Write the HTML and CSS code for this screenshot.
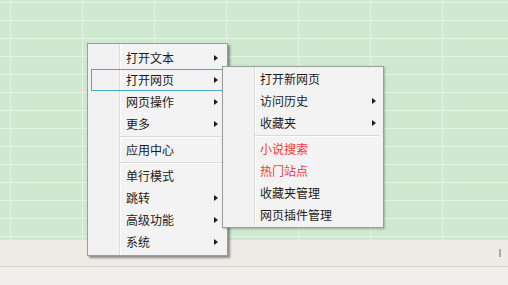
FILE: index.html
```html
<!DOCTYPE html>
<html lang="zh">
<head>
<meta charset="utf-8">
<link rel="stylesheet" href="styles.css">
</head>
<body>
<div class="desk">
  <div class="sheet"></div>
  <div class="status"><span class="grip"></span></div>
  <div class="footer"></div>

  <div class="menu main">
    <div class="item"><span>打开文本</span><i class="arrow"></i></div>
    <div class="item active"><span>打开网页</span><i class="arrow"></i></div>
    <div class="item"><span>网页操作</span><i class="arrow"></i></div>
    <div class="item"><span>更多</span><i class="arrow"></i></div>
    <div class="sep"></div>
    <div class="item"><span>应用中心</span></div>
    <div class="sep"></div>
    <div class="item"><span>单行模式</span></div>
    <div class="item"><span>跳转</span><i class="arrow"></i></div>
    <div class="item"><span>高级功能</span><i class="arrow"></i></div>
    <div class="item"><span>系统</span><i class="arrow"></i></div>
  </div>

  <div class="menu sub">
    <div class="item"><span>打开新网页</span></div>
    <div class="item"><span>访问历史</span><i class="arrow"></i></div>
    <div class="item"><span>收藏夹</span><i class="arrow"></i></div>
    <div class="sep"></div>
    <div class="item hot"><span>小说搜索</span></div>
    <div class="item hot"><span>热门站点</span></div>
    <div class="item"><span>收藏夹管理</span></div>
    <div class="item"><span>网页插件管理</span></div>
  </div>
</div>
</body>
</html>
```

FILE: styles.css
```css
html, body {
  margin: 0;
  padding: 0;
}
body {
  width: 508px;
  height: 285px;
  overflow: hidden;
  font-family: "Noto Sans CJK SC", "Noto Sans", sans-serif;
  font-size: 12px;
}
.desk {
  position: relative;
  width: 508px;
  height: 285px;
  display: flex;
  flex-direction: column;
}
.sheet {
  height: 240px;
  background-color: #cde8cf;
  background-image:
    repeating-linear-gradient(to bottom, transparent 0 2px, #e4f2e5 2px 3px, transparent 3px 18px),
    repeating-linear-gradient(to right, transparent 0 10px, #e4f2e5 10px 11px, transparent 11px 72px);
  background-size: 100% 100%, 100% 100%;
}
.status {
  height: 26px;
  background: #ecebe6;
  border-bottom: 1px solid #d6d4ce;
  display: flex;
  justify-content: flex-end;
  align-items: center;
  padding-right: 7px;
}
.grip {
  width: 2px;
  height: 8px;
  background: #a9a9a6;
}
.footer {
  flex: 1;
  background: #efeeea;
}

.menu {
  position: absolute;
  box-sizing: border-box;
  border: 1px solid #9c9c9c;
  color: #1b1b1b;
  display: flex;
  flex-direction: column;
}
.main {
  left: 87px;
  top: 43px;
  width: 141px;
  height: 213px;
  padding: 3px 0 2px;
  background: linear-gradient(to right, #f1f1f1 31px, #dcdcdc 31px 32px, #fdfdfd 32px 33px, #f3f3f3 33px);
  box-shadow: 2px 2px 2px rgba(0, 0, 0, 0.4);
}
.sub {
  left: 222px;
  top: 66px;
  width: 162px;
  height: 162px;
  padding: 1px 0 0;
  background: linear-gradient(to right, #f1f1f1 31px, #dcdcdc 31px 32px, #fdfdfd 32px 33px, #f3f3f3 33px);
  box-shadow: 1px 1px 2px rgba(0, 0, 0, 0.25);
}
.item {
  box-sizing: border-box;
  height: 22px;
  margin: 0 3px;
  border: 1px solid transparent;
  display: flex;
  align-items: center;
  justify-content: space-between;
  line-height: 20px;
}
.main .item {
  padding: 0 5px 0 34px;
}
.sub .item {
  padding: 0 3px 0 33px;
}
.item.active {
  border-color: #4aa6d9;
}
.item.hot {
  color: #ec3b3b;
}
.arrow {
  width: 0;
  height: 0;
  border-top: 3.5px solid transparent;
  border-bottom: 3.5px solid transparent;
  border-left: 4px solid #1b1b1b;
}
.sep {
  height: 4px;
  margin-left: 32px;
  margin-right: 4px;
  display: flex;
  flex-direction: column;
  justify-content: center;
}
.sep::before {
  content: "";
  height: 1px;
  background: #dadada;
}
.sep::after {
  content: "";
  height: 1px;
  background: #fdfdfd;
}
```
